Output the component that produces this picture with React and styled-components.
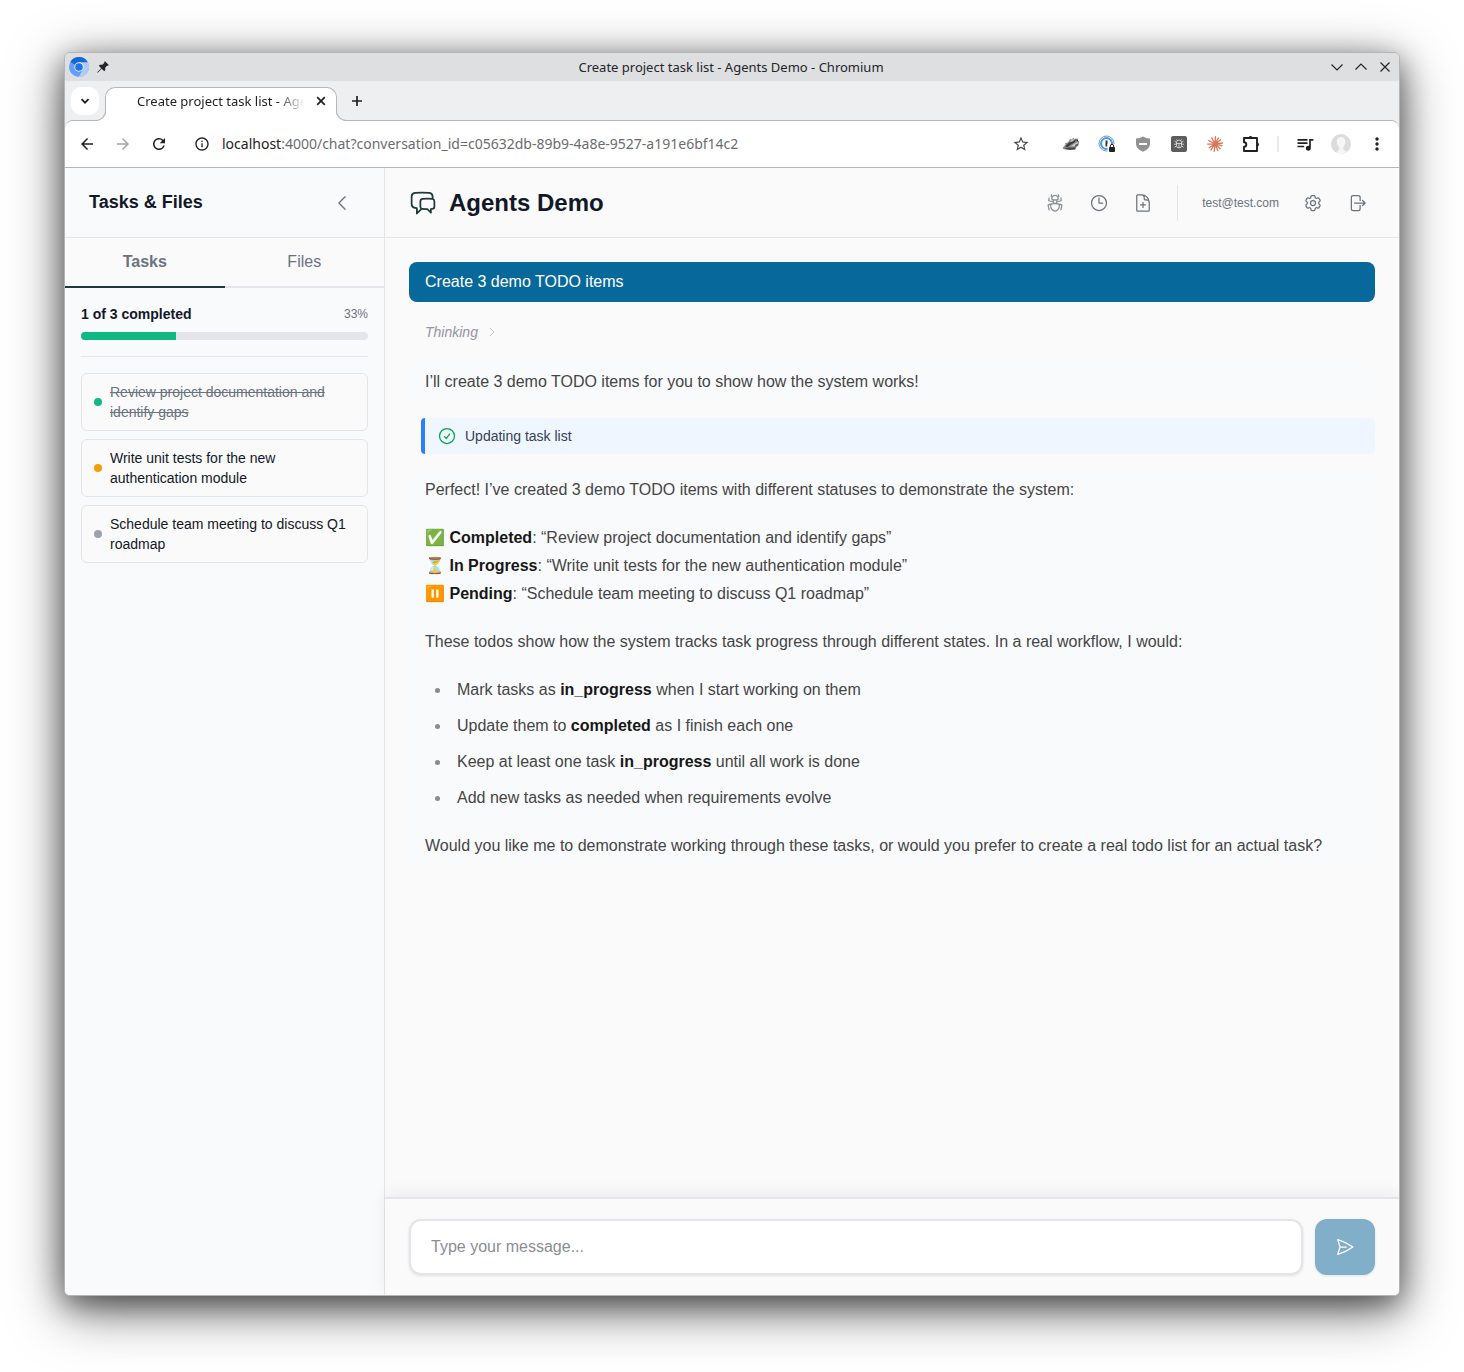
import styled, { createGlobalStyle, css } from "styled-components";
import {
  HiOutlineArrowRightOnRectangle,
  HiOutlineBugAnt,
  HiOutlineChatBubbleLeftRight,
  HiOutlineCheckCircle,
  HiOutlineChevronLeft,
  HiOutlineChevronRight,
  HiOutlineClock,
  HiOutlineCog6Tooth,
  HiOutlineDocumentPlus,
  HiOutlinePaperAirplane,
} from "react-icons/hi2";
import {
  MdArrowBack,
  MdArrowForward,
  MdInfoOutline,
  MdMoreVert,
  MdQueueMusic,
  MdRefresh,
  MdStarBorder,
} from "react-icons/md";

const GlobalStyle = createGlobalStyle`
  *, *::before, *::after {
    box-sizing: border-box;
  }
  body {
    margin: 0;
    background: #fff;
    font-family: "Liberation Sans", Arial, sans-serif;
  }
  h1, h2, p, ul {
    margin: 0;
    padding: 0;
  }
  button, input {
    font: inherit;
  }
  button {
    display: inline-flex;
    align-items: center;
    justify-content: center;
    padding: 0;
    border: 0;
    background: none;
    color: inherit;
  }
  svg {
    display: block;
    flex-shrink: 0;
  }
`;

/* Desktop and browser window */

const Desktop = styled.div`
  display: flex;
  min-height: 100vh;
  padding: 52px 64px 76px;
`;
const Window = styled.div`
  flex: 1;
  min-width: 0;
  display: flex;
  flex-direction: column;
  overflow: hidden;
  border: 1px solid #b4b5b6;
  border-radius: 6px;
  background: #eeeff1;
  box-shadow:
    0 14px 54px rgba(0, 0, 0, 0.56),
    0 8px 28px rgba(0, 0, 0, 0.44);
`;
const TitleBar = styled.div`
  display: grid;
  grid-template-columns: 1fr auto 1fr;
  align-items: center;
  height: 28px;
  padding: 0 6px 0 4px;
  background: #dedfe0;
  color: #232629;
  font: 13px/20px "Noto Sans", sans-serif;
`;
const TitleSide = styled.div`
  display: flex;
  align-items: center;
  gap: 8px;
  justify-content: ${({ $end }) => ($end ? "flex-end" : "flex-start")};
`;
const WindowButton = styled.button`
  width: 16px;
  height: 20px;
`;
const TabStrip = styled.div`
  position: relative;
  z-index: 1;
  display: flex;
  align-items: flex-start;
  height: 40px;
  margin-bottom: -1px;
  padding: 6px 6px 0;
  color: #1f2023;
`;
const TabSearch = styled.button`
  width: 28px;
  height: 28px;
  border-radius: 10px;
  background: #fff;
`;
const BrowserTab = styled.div`
  position: relative;
  display: flex;
  align-items: center;
  width: 232px;
  height: 34px;
  margin-left: 6px;
  padding: 0 7px 8px 31px;
  border: 1px solid #b5b6b7;
  border-bottom: 0;
  border-radius: 10px 10px 0 0;
  background: #fff;
  font: 13px/20px "Noto Sans", sans-serif;

  /* flared feet that run into the toolbar line */
  &::before,
  &::after {
    content: "";
    position: absolute;
    bottom: 0;
    width: 10px;
    height: 10px;
    border-bottom: 1px solid #b5b6b7;
    box-shadow: 0 0 0 6px #fff;
    clip-path: inset(0);
  }
  &::before {
    left: -10px;
    border-right: 1px solid #b5b6b7;
    border-bottom-right-radius: 10px;
  }
  &::after {
    right: -10px;
    border-left: 1px solid #b5b6b7;
    border-bottom-left-radius: 10px;
  }
`;
const TabTitle = styled.span`
  flex: 1;
  min-width: 0;
  overflow: hidden;
  white-space: nowrap;
  mask-image: linear-gradient(to right, #000 140px, transparent 168px);
`;
const TabButton = styled.button`
  width: 16px;
  height: 16px;
  margin-left: 6px;
`;
const NewTab = styled.button`
  width: 28px;
  height: 28px;
  margin-left: 6px;
`;
const AddressBar = styled.div`
  display: flex;
  align-items: center;
  height: 48px;
  padding: 0 12px;
  border: solid #b5b6b7;
  border-width: 1px 0;
  border-radius: 8px 8px 0 0;
  background: #fff;
  color: #1f2023;
`;
const NavButtons = styled.div`
  display: flex;
  gap: 16px;
`;
const ToolButton = styled.button`
  width: 20px;
  height: 20px;
  color: ${({ $color }) => $color || "inherit"};
`;
const Address = styled.div`
  flex: 1;
  min-width: 0;
  display: flex;
  align-items: center;
  gap: 12px;
  margin: 0 10px 0 25px;
  font: 14px/20px "Noto Sans", sans-serif;
  color: #6b6d70;

  b {
    font-weight: 400;
    color: #1f2023;
  }
`;
const Extensions = styled.div`
  display: flex;
  align-items: center;
  gap: 16px;
  margin-left: 30px;
`;
const ToolDivider = styled.span`
  width: 2px;
  height: 16px;
  background: #e8eaed;
`;

/* Side panel */

const Page = styled.div`
  flex: 1;
  display: grid;
  grid-template-columns: 320px minmax(0, 1fr);
  background: #fafafa;
`;
const Sidebar = styled.aside`
  border-right: 1px solid #e4e5ea;
  background: #f9fafc;
  color: #111827;
`;
const SidebarHeader = styled.header`
  display: flex;
  align-items: center;
  justify-content: space-between;
  height: 70px;
  padding: 0 32px 0 24px;
  border-bottom: 1px solid #e4e5ea;

  h2 {
    padding-bottom: 2px;
    font-size: 18px;
    line-height: 28px;
  }
`;
const CollapseButton = styled.button`
  width: 20px;
  height: 20px;
  color: #6b7280;
`;
const Tabs = styled.div`
  display: grid;
  grid-template-columns: 1fr 1fr;
`;
const Tab = styled.button`
  height: 50px;
  border-bottom: 2px solid ${({ $active }) => ($active ? "#1c3a3a" : "#e4e5ea")};
  background: #fafafa;
  color: #6b7280;
  font-size: 16px;
  font-weight: ${({ $active }) => ($active ? 700 : 400)};
`;
const SidebarBody = styled.div`
  padding: 16px;
`;
const Progress = styled.div`
  padding-bottom: 16px;
  border-bottom: 1px solid #e4e5ea;
`;
const ProgressLabel = styled.div`
  display: flex;
  align-items: center;
  justify-content: space-between;
  margin-bottom: 8px;
  font-size: 14px;
  font-weight: 700;
  line-height: 20px;

  span {
    color: #6b7280;
    font-size: 12px;
    font-weight: 400;
  }
`;
const ProgressTrack = styled.div`
  height: 8px;
  overflow: hidden;
  border-radius: 4px;
  background: #e4e5ea;
`;
const ProgressFill = styled.div`
  height: 100%;
  background: #10b981;
`;
const TaskList = styled.ul`
  display: grid;
  gap: 8px;
  margin-top: 16px;
  list-style: none;
`;
const statusColors = {
  completed: "#10b981",
  in_progress: "#f59e0b",
  pending: "#9ca3af",
};
const TaskCard = styled.li`
  display: flex;
  align-items: center;
  gap: 8px;
  padding: 8px 12px;
  border: 1px solid #e4e5ea;
  border-radius: 6px;
  background: #fafafa;
  font-size: 14px;
  line-height: 20px;

  &::before {
    content: "";
    flex-shrink: 0;
    width: 8px;
    height: 8px;
    border-radius: 50%;
    background: ${({ $status }) => statusColors[$status]};
  }
  ${({ $status }) =>
    $status === "completed" &&
    css`
      color: #6b7280;
      text-decoration: line-through;
    `}
`;

/* Chat */

const Chat = styled.main`
  display: flex;
  flex-direction: column;
`;
const ChatHeader = styled.header`
  display: flex;
  align-items: center;
  gap: 12px;
  height: 70px;
  padding: 0 24px;
  border-bottom: 1px solid #e4e5ea;
  color: #1c3a3a;

  h1 {
    color: #111827;
    font-size: 24px;
    line-height: 32px;
  }
`;
const HeaderActions = styled.div`
  display: flex;
  align-items: center;
  gap: 8px;
  margin-left: auto;
  color: #6b7280;
  font-size: 12px;
`;
const IconButton = styled.button`
  width: 36px;
  height: 36px;
  opacity: ${({ $faded }) => ($faded ? 0.8 : 1)};
`;
const Account = styled.div`
  display: flex;
  align-items: center;
  gap: 16px;
  height: 36px;
  margin-left: 8px;
  padding-left: 24px;
  border-left: 1px solid #e4e5ea;
`;
const AccountButtons = styled.div`
  display: flex;
  gap: 8px;
`;
const Messages = styled.div`
  flex: 1;
  display: flex;
  flex-direction: column;
  gap: 16px;
  padding: 24px;
  font-size: 16px;
  line-height: 28px;
`;
const UserMessage = styled.div`
  padding: 6px 16px;
  border-radius: 8px;
  background: #07689b;
  color: #fff;
`;
const Thinking = styled.button`
  justify-content: flex-start;
  gap: 8px;
  height: 28px;
  padding: 0 16px;
  color: #9395a0;
  font-size: 14px;
  font-style: italic;

  svg {
    opacity: 0.8;
  }
`;
const AgentMessage = styled.div`
  display: grid;
  gap: 20px;
  padding: 6px 16px;
  border-radius: 8px;
  background: #f9fafc;
  color: #454545;

  strong {
    color: #171717;
  }
`;
const ToolCall = styled.div`
  display: flex;
  align-items: center;
  gap: 8px;
  height: 36px;
  margin-left: 12px;
  padding: 0 12px;
  border-left: 4px solid #2b7fff;
  border-radius: 4px;
  background: #eff6ff;
  color: #364153;
  font-size: 14px;

  svg {
    color: #00a63e;
  }
`;
const Bullets = styled.ul`
  display: grid;
  gap: 8px;
  list-style: none;

  li {
    position: relative;
    padding-left: 32px;
  }
  li::before {
    content: "";
    position: absolute;
    top: 12px;
    left: 10px;
    width: 5px;
    height: 5px;
    border-radius: 50%;
    background: #8a8b8e;
  }
`;
const Composer = styled.form`
  display: flex;
  gap: 12px;
  padding: 20px 24px;
  border-top: 2px solid #e4e5ea;
  background: #fafafa;
  box-shadow: 0 -4px 16px rgba(0, 0, 0, 0.06);
`;
const MessageInput = styled.input`
  flex: 1;
  min-width: 0;
  height: 56px;
  padding: 0 20px;
  border: 2px solid #e4e5ea;
  border-radius: 12px;
  background: #fff;
  box-shadow: 0 1px 3px rgba(0, 0, 0, 0.1);
  font-size: 16px;

  &::placeholder {
    color: #8b8d94;
    opacity: 1;
  }
`;
const SendButton = styled.button`
  width: 60px;
  height: 56px;
  border-radius: 12px;
  background: #81aec9;
  box-shadow: 0 1px 3px rgba(0, 0, 0, 0.1);
  color: #fff;
`;

/* Icons that no package has */

const ChromiumLogo = () => (
  <svg width="20" height="20" viewBox="0 0 20 20">
    <circle cx="10" cy="10" r="10" fill="#669df6" />
    <path d="M10 10 1.3 5A10 10 0 0 1 18.7 5L10 5.4Z" fill="#1967d2" />
    <path d="M10 5.4h8.9A10 10 0 0 1 9.6 20L14 12.3Z" fill="#aecbfa" />
    <circle cx="10" cy="10" r="4.7" fill="#e8f0fe" />
    <circle cx="10" cy="10" r="3.8" fill="#1a73e8" />
  </svg>
);
const Pin = () => (
  <svg width="12" height="12" viewBox="0 0 12 12" fill="#232629">
    <path d="M8 .2 11.800 4l-1 .8-.8-.1-1.800 2 .1 2.400-1.100 1.100L4.700 7.700.7 11.700l-.5-.4L4.200 7.200 1.800 4.800l1.100-1.100 2.400.1 2-1.800-.1-.9Z" />
  </svg>
);
const Glyph = ({ d, size = 12, width = 1.2 }) => (
  <svg
    width={size}
    height={size}
    viewBox="0 0 12 12"
    fill="none"
    stroke="currentColor"
    strokeWidth={width}
  >
    <path d={d} />
  </svg>
);
const Badger = () => (
  <svg width="18" height="14" viewBox="0 0 18 14">
    <path d="m.5 11 3-3.500L3 6l3-.5L8 2l1.500.5L11.500.8l1 1.200 3-.8.500 2 1.200 1.300-.7 4-2 1.500-1 2.500-6 .5-5.500-.7Z" fill="#8a8a8a" />
    <path d="m3.500 9 3.500-3.500 3-.5 4.500-3-2 3.500L8 8l-3 2.500Z" fill="#3c3c3c" />
    <path d="m8 4.500 2-2 2.500-.2-2 1.700ZM9 9.500l3-2.500 3.500-2 .5 1.500-3 2.500Z" fill="#d2d2d2" />
    <path d="m2 11.800 5-1.300 5 .3 1.500-1-.5 2.400-5 .6ZM13 8l3-1.500-.5 1.700-2 1Z" fill="#444" />
    <circle cx="15.200" cy="3.500" r=".8" fill="#222" />
  </svg>
);
const PasswordLock = () => (
  <svg width="18" height="18" viewBox="0 0 18 18">
    <circle cx="8.500" cy="8.500" r="7.500" fill="#fff" stroke="#8c8f92" />
    <circle cx="8.500" cy="8.500" r="5.500" fill="none" stroke="#3b9bff" strokeWidth="2" />
    <path d="M8.500 5.500v6" stroke="#333" strokeWidth="2" />
    <path d="M9.500 9h8v9h-8z" fill="#fff" />
    <rect x="11" y="12" width="6" height="5" rx="1" fill="#222" />
    <path d="M12.300 12v-1a1.700 1.700 0 0 1 3.400 0v1" fill="none" stroke="#222" />
  </svg>
);
const Shield = () => (
  <svg width="16" height="16" viewBox="0 0 16 16">
    <path d="M8 .5c2 1.300 4.300 2 7 2v5c0 4-3 6.700-7 8.200-4-1.500-7-4.200-7-8.200v-5c2.700 0 5-.7 7-2Z" fill="#929292" />
    <path d="M4 7h8v2H4z" fill="#fff" />
  </svg>
);
const AtomBadge = () => (
  <svg width="16" height="16" viewBox="0 0 16 16" fill="none" stroke="#e8e8e8" strokeWidth=".8">
    <rect width="16" height="16" rx="2" fill="#5c5c5c" stroke="none" />
    <path d="M5.500 6.500a2.500 2.500 0 0 1 5 0v3a2.500 2.500 0 0 1-5 0ZM5.500 7.500h5M8 7.500v4.500M5.500 6.500 3.500 5M5.500 8.200H3M5.500 9.800l-2 1.500M10.500 6.500l2-1.500M10.500 8.200H13M10.500 9.800l2 1.500M6.300 4.500l-1-1.200M9.700 4.500l1-1.200" />
  </svg>
);
const Starburst = () => (
  <svg width="16" height="16" viewBox="0 0 16 16" stroke="#d97757" strokeWidth="1.300">
    <path d="M8 8 8.500.3M8 8l3.600-6.400M8 8l6-4.500M8 8l7.800-1M8 8l7.500 1.800M8 8l5.600 5M8 8l3 7M8 8l-.8 7.700M8 8l-4.400 6.300M8 8l-6.300 4M8 8 .2 8.200M8 8 1.300 4.300M8 8 4.500 1.200" />
  </svg>
);
const Puzzle = () => (
  <svg width="20" height="20" viewBox="0 0 20 20">
    <path
      d="M3 4h13v13H3v-4.200a2.300 2.300 0 0 0 0-4.600Z"
      fill="none"
      stroke="currentColor"
      strokeWidth="1.900"
      strokeLinejoin="round"
    />
    <path d="M7.500 4a2 2 0 0 1 4 0ZM16 8.500a2 2 0 0 1 0 4Z" fill="currentColor" />
  </svg>
);
const Avatar = () => (
  <svg width="20" height="20" viewBox="0 0 20 20">
    <circle cx="10" cy="10" r="10" fill="#dcdcdc" />
    <path d="M10 3c3 0 4.200 2.200 4.200 5 0 2.500-1 4-2 5v2.500c1.500.5 2.500 1.200 3 2.600A10 10 0 0 1 6 19.200c0-1.800 1-3 2.300-3.700V13c-1.500-1-2.500-2.500-2.500-5 0-2.800 1.200-5 4.200-5Z" fill="#f4f6f8" />
  </svg>
);

const tasks = [
  { status: "completed", title: "Review project documentation and identify gaps" },
  { status: "in_progress", title: "Write unit tests for the new authentication module" },
  { status: "pending", title: "Schedule team meeting to discuss Q1 roadmap" },
];

const BrowserChrome = () => (
  <>
    <TitleBar>
      <TitleSide>
        <ChromiumLogo />
        <Pin />
      </TitleSide>
      <span>Create project task list - Agents Demo - Chromium</span>
      <TitleSide $end>
        <WindowButton aria-label="Minimize">
          <Glyph d="M.5 3.500 6 9l5.500-5.500" />
        </WindowButton>
        <WindowButton aria-label="Maximize">
          <Glyph d="M.5 8.500 6 3l5.500 5.500" />
        </WindowButton>
        <WindowButton aria-label="Close window">
          <Glyph d="m1.500 1.500 9 9m0-9-9 9" />
        </WindowButton>
      </TitleSide>
    </TitleBar>
    <TabStrip>
      <TabSearch aria-label="Search tabs">
        <Glyph d="m2.500 4.200 3.500 3.500 3.500-3.500" width={1.8} />
      </TabSearch>
      <BrowserTab>
        <TabTitle>Create project task list - Agents Demo</TabTitle>
        <TabButton aria-label="Close tab">
          <Glyph d="m2.200 2.200 7.600 7.600m0-7.600-7.600 7.600" width={1.7} />
        </TabButton>
      </BrowserTab>
      <NewTab aria-label="New tab">
        <Glyph d="M6 1v10M1 6h10" width={1.7} />
      </NewTab>
    </TabStrip>
    <AddressBar>
      <NavButtons>
        <ToolButton aria-label="Back">
          <MdArrowBack size={18} />
        </ToolButton>
        <ToolButton aria-label="Forward" $color="#a5a6a8">
          <MdArrowForward size={18} />
        </ToolButton>
        <ToolButton aria-label="Reload">
          <MdRefresh size={18} />
        </ToolButton>
      </NavButtons>
      <Address>
        <MdInfoOutline size={16} color="#1f2023" />
        <span>
          <b>localhost</b>:4000/chat?conversation_id=c05632db-89b9-4a8e-9527-a191e6bf14c2
        </span>
      </Address>
      <ToolButton aria-label="Bookmark" $color="#474a4d">
        <MdStarBorder size={18} />
      </ToolButton>
      <Extensions>
        <ToolButton aria-label="Privacy Badger">
          <Badger />
        </ToolButton>
        <ToolButton aria-label="Passwords">
          <PasswordLock />
        </ToolButton>
        <ToolButton aria-label="Shield">
          <Shield />
        </ToolButton>
        <ToolButton aria-label="Developer tools">
          <AtomBadge />
        </ToolButton>
        <ToolButton aria-label="Claude">
          <Starburst />
        </ToolButton>
        <ToolButton aria-label="Extensions">
          <Puzzle />
        </ToolButton>
        <ToolDivider />
        <ToolButton aria-label="Media">
          <MdQueueMusic size={20} />
        </ToolButton>
        <ToolButton aria-label="Profile">
          <Avatar />
        </ToolButton>
        <ToolButton aria-label="Menu">
          <MdMoreVert size={20} />
        </ToolButton>
      </Extensions>
    </AddressBar>
  </>
);

const TasksPanel = () => (
  <Sidebar>
    <SidebarHeader>
      <h2>Tasks &amp; Files</h2>
      <CollapseButton aria-label="Collapse">
        <HiOutlineChevronLeft size={20} />
      </CollapseButton>
    </SidebarHeader>
    <Tabs>
      <Tab $active>Tasks</Tab>
      <Tab>Files</Tab>
    </Tabs>
    <SidebarBody>
      <Progress>
        <ProgressLabel>
          1 of 3 completed
          <span>33%</span>
        </ProgressLabel>
        <ProgressTrack>
          <ProgressFill style={{ width: "33%" }} />
        </ProgressTrack>
      </Progress>
      <TaskList>
        {tasks.map(({ status, title }) => (
          <TaskCard key={status} $status={status}>
            {title}
          </TaskCard>
        ))}
      </TaskList>
    </SidebarBody>
  </Sidebar>
);

const ChatPanel = () => (
  <Chat>
    <ChatHeader>
      <HiOutlineChatBubbleLeftRight size={28} />
      <h1>Agents Demo</h1>
      <HeaderActions>
        <IconButton aria-label="Debug" $faded>
          <HiOutlineBugAnt size={20} />
        </IconButton>
        <IconButton aria-label="History">
          <HiOutlineClock size={20} />
        </IconButton>
        <IconButton aria-label="New conversation">
          <HiOutlineDocumentPlus size={20} />
        </IconButton>
        <Account>
          <span>test@test.com</span>
          <AccountButtons>
            <IconButton aria-label="Settings">
              <HiOutlineCog6Tooth size={20} />
            </IconButton>
            <IconButton aria-label="Log out">
              <HiOutlineArrowRightOnRectangle size={20} />
            </IconButton>
          </AccountButtons>
        </Account>
      </HeaderActions>
    </ChatHeader>
    <Messages>
      <UserMessage>Create 3 demo TODO items</UserMessage>
      <Thinking>
        Thinking
        <HiOutlineChevronRight size={12} />
      </Thinking>
      <AgentMessage>
        <p>I’ll create 3 demo TODO items for you to show how the system works!</p>
      </AgentMessage>
      <ToolCall>
        <HiOutlineCheckCircle size={20} />
        Updating task list
      </ToolCall>
      <AgentMessage>
        <p>
          Perfect! I’ve created 3 demo TODO items with different statuses to demonstrate the
          system:
        </p>
        <p>
          ✅ <strong>Completed</strong>: “Review project documentation and identify gaps”
          <br />⏳ <strong>In Progress</strong>: “Write unit tests for the new authentication
          module”
          <br />
          ⏸️ <strong>Pending</strong>: “Schedule team meeting to discuss Q1 roadmap”
        </p>
        <p>
          These todos show how the system tracks task progress through different states. In a
          real workflow, I would:
        </p>
        <Bullets>
          <li>
            Mark tasks as <strong>in_progress</strong> when I start working on them
          </li>
          <li>
            Update them to <strong>completed</strong> as I finish each one
          </li>
          <li>
            Keep at least one task <strong>in_progress</strong> until all work is done
          </li>
          <li>Add new tasks as needed when requirements evolve</li>
        </Bullets>
        <p>
          Would you like me to demonstrate working through these tasks, or would you prefer to
          create a real todo list for an actual task?
        </p>
      </AgentMessage>
    </Messages>
    <Composer>
      <MessageInput placeholder="Type your message..." aria-label="Message" />
      <SendButton type="button" aria-label="Send">
        <HiOutlinePaperAirplane size={20} />
      </SendButton>
    </Composer>
  </Chat>
);

const App = () => {
  return (
    <>
      <GlobalStyle />
      <Desktop>
        <Window>
          <BrowserChrome />
          <Page>
            <TasksPanel />
            <ChatPanel />
          </Page>
        </Window>
      </Desktop>
    </>
  );
};
export default App;
